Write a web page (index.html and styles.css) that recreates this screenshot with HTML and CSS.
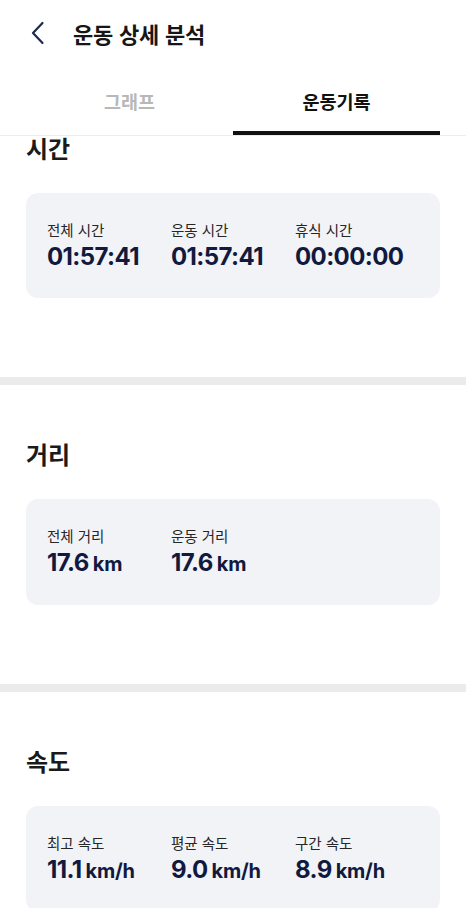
FILE: index.html
```html
<!DOCTYPE html>
<html lang="ko">
<head>
<meta charset="utf-8">
<title>운동 상세 분석</title>
<link rel="stylesheet" href="styles.css">
</head>
<body>
<div class="app">
  <header class="topbar">
    <button class="back" aria-label="뒤로">
      <svg width="14" height="24" viewBox="0 0 14 24"><path d="M11.5 2 L2 12 L11.5 22" fill="none" stroke="#1d2a4d" stroke-width="2.2" stroke-linecap="round" stroke-linejoin="round"/></svg>
    </button>
    <h1 class="title">운동 상세 분석</h1>
  </header>
  <nav class="tabs">
    <div class="tab">그래프</div>
    <div class="tab active">운동기록</div>
  </nav>
  <main class="viewport">
    <div class="scroll">
      <section class="section">
        <h2 class="heading">시간</h2>
        <div class="card">
          <div class="stat"><div class="label">전체 시간</div><div class="value">01:57:41</div></div>
          <div class="stat"><div class="label">운동 시간</div><div class="value">01:57:41</div></div>
          <div class="stat"><div class="label">휴식 시간</div><div class="value">00:00:00</div></div>
        </div>
      </section>
      <div class="divider"></div>
      <section class="section">
        <h2 class="heading">거리</h2>
        <div class="card">
          <div class="stat"><div class="label">전체 거리</div><div class="value">17.6<span class="unit">km</span></div></div>
          <div class="stat"><div class="label">운동 거리</div><div class="value">17.6<span class="unit">km</span></div></div>
        </div>
      </section>
      <div class="divider"></div>
      <section class="section">
        <h2 class="heading">속도</h2>
        <div class="card">
          <div class="stat"><div class="label">최고 속도</div><div class="value">11.1<span class="unit">km/h</span></div></div>
          <div class="stat"><div class="label">평균 속도</div><div class="value">9.0<span class="unit">km/h</span></div></div>
          <div class="stat"><div class="label">구간 속도</div><div class="value">8.9<span class="unit">km/h</span></div></div>
        </div>
      </section>
    </div>
  </main>
</div>
</body>
</html>
```
FILE: styles.css
```css
* { box-sizing: border-box; }
html, body {
  margin: 0;
  padding: 0;
  background: #ffffff;
  overflow: hidden;
}
body {
  font-family: "Noto Sans CJK KR", "Noto Sans", sans-serif;
  color: #1a1a1a;
  width: 466px;
  height: 908px;
}
.app {
  display: flex;
  flex-direction: column;
  height: 908px;
}
.topbar {
  display: flex;
  align-items: center;
  height: 66px;
  padding: 0 0 0 31px;
  gap: 26px;
}
.back {
  border: 0;
  background: none;
  padding: 0;
  width: 16px;
  height: 24px;
  display: flex;
  align-items: center;
}
.title {
  margin: 0;
  font-size: 22px;
  font-weight: 700;
  letter-spacing: -0.2px;
  color: #161616;
}
.tabs {
  display: flex;
  padding: 0 26px;
  height: 70px;
  border-bottom: 1px solid #ececec;
}
.tab {
  flex: 1;
  display: flex;
  align-items: center;
  justify-content: center;
  font-size: 18.5px;
  font-weight: 700;
  color: #b8b8b8;
  border-bottom: 4px solid transparent;
  padding-top: 4px;
}
.tab.active {
  color: #111111;
  border-bottom-color: #111111;
}
.viewport {
  flex: 1;
  overflow: hidden;
}
.scroll {
  margin-top: -57px;
}
.section {
  padding: 53px 26px 79px;
}
.heading {
  margin: 0 0 29px;
  font-size: 24px;
  line-height: 32px;
  font-weight: 700;
  color: #1a1a1a;
}
.card {
  background: #f2f3f7;
  border-radius: 12px;
  padding: 27px 21px 26px;
  display: grid;
  grid-template-columns: 124px 124px 124px;
}
.label {
  font-size: 14.5px;
  line-height: 20px;
  color: #262626;
}
.value {
  margin-top: 2px;
  font-family: "Inter", "Noto Sans", sans-serif;
  font-size: 24px;
  line-height: 30px;
  font-weight: 700;
  letter-spacing: -0.6px;
  color: #111a3e;
}
.unit {
  font-size: 20px;
  margin-left: 4px;
  letter-spacing: -0.2px;
}
.divider {
  height: 8px;
  background: #ebebeb;
}
```
